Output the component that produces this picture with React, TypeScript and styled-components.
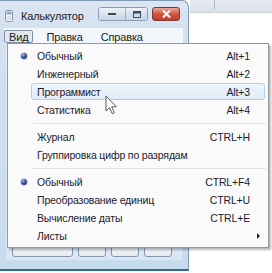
import React from "react";
import styled, { createGlobalStyle } from "styled-components";

const Global = createGlobalStyle`
  html, body { margin: 0; padding: 0; background: #ffffff; overflow: hidden; }
  body { font-family: "Liberation Sans", Arial, sans-serif; letter-spacing: -0.15px; }
`;

const Desktop = styled.div`
  position: relative;
  width: 272px;
  height: 273px;
  background: #ffffff;
  overflow: hidden;
`;

const BackStrip = styled.div`
  position: absolute;
  top: 0;
  left: 190px;
  right: 0;
  height: 12px;
  background: linear-gradient(#e6ebf1, #d9e1ea);
  border-bottom: 1px solid #c9d3de;
`;

const BackDivider = styled.div`
  position: absolute;
  top: 0;
  left: 24px;
  width: 1px;
  height: 9px;
  background: #a9b6c6;
`;

const Window = styled.div`
  position: absolute;
  left: -1px;
  top: 0;
  width: 190px;
  height: 271px;
  display: flex;
  flex-direction: column;
  background: linear-gradient(#dbe6f2 0px, #d3e1ef 30px, #c8dbee 100%);
  border: 1px solid #7f98b3;
  border-left: none;
  border-bottom: 2px solid #2f6e86;
  border-radius: 0 7px 0 0;
  box-sizing: border-box;
`;

const TitleBar = styled.div`
  height: 27px;
  flex: none;
  display: flex;
  align-items: center;
  padding: 2px 8px 0 6px;
  box-sizing: border-box;
`;

const Title = styled.span`
  margin-left: 8px;
  font-size: 11px;
  color: #1b1b22;
  flex: 1;
`;

const CaptionGroup = styled.div`
  display: flex;
  align-items: center;
  gap: 4px;
  margin-top: -3px;
`;

const MinMaxPair = styled.div`
  display: flex;
  border: 1px solid #8c9db3;
  border-radius: 3px;
  overflow: hidden;
  height: 14px;
  box-sizing: border-box;
`;

const CapBtn = styled.div<{ $w: number; $divider?: boolean }>`
  width: ${(p) => p.$w}px;
  height: 12px;
  display: flex;
  align-items: center;
  justify-content: center;
  background: linear-gradient(#eef3f9, #d6e1ee 50%, #c9d7e8);
  border-left: ${(p) => (p.$divider ? "1px solid #9fb0c4" : "none")};
  box-sizing: border-box;
`;

const CloseBtn = styled.div`
  width: 28px;
  height: 14px;
  border: 1px solid #7a3a33;
  border-radius: 3px;
  background: linear-gradient(#e9a89b, #d2563f 50%, #c0402c);
  display: flex;
  align-items: center;
  justify-content: center;
  box-sizing: border-box;
`;

const MenuBar = styled.div`
  height: 16px;
  flex: none;
  margin: 0 5px 0 5px;
  display: flex;
  align-items: center;
  gap: 5px;
  background: #f3f6fa;
`;

const MenuTitle = styled.span<{ $active?: boolean }>`
  font-size: 11px;
  color: #1b1b22;
  padding: 0 4px;
  height: 13px;
  line-height: 12px;
  box-sizing: border-box;
  border: 1px solid ${(p) => (p.$active ? "#7f8fa4" : "transparent")};
  border-radius: 2px;
  background: ${(p) => (p.$active ? "#e3e8ef" : "transparent")};
  margin-right: 3px;
`;

const Client = styled.div`
  flex: 1;
  margin: 0 6px 9px 7px;
  background: linear-gradient(#e7eef7, #dae6f3);
  display: flex;
  flex-direction: column;
  justify-content: flex-end;
  padding: 0 0 3px 6px;
`;

const KeyRow = styled.div`
  display: grid;
  grid-template-columns: repeat(5, 28px);
  gap: 5px;
`;

const Key = styled.div<{ $span?: number }>`
  grid-column: span ${(p) => p.$span ?? 1};
  height: 22px;
  border: 1px solid #8797ab;
  border-radius: 3px;
  background: linear-gradient(#f6f8fb, #e6ecf3);
  box-sizing: border-box;
`;

const DropMenu = styled.div`
  position: absolute;
  left: 7px;
  top: 43px;
  width: 262px;
  padding: 3px 2px 2px 2px;
  box-sizing: border-box;
  background: #fafafa;
  border: 1px solid #979797;
  box-shadow: 2px 2px 2px rgba(0, 0, 0, 0.28);
  display: flex;
  flex-direction: column;
`;

const Item = styled.div<{ $hot?: boolean }>`
  position: relative;
  height: 18px;
  display: grid;
  grid-template-columns: 25px 1fr auto 16px;
  align-items: center;
  font-size: 10.5px;
  color: #1e1a2c;
  &::before {
    content: "";
    position: absolute;
    left: 21px;
    right: 1px;
    top: 0;
    bottom: 1px;
    border-radius: 3px;
    border: 1px solid ${(p) => (p.$hot ? "#b3cdec" : "transparent")};
    background: ${(p) => (p.$hot ? "linear-gradient(#eef4fc, #e2ecf9)" : "transparent")};
  }
`;

const Gutter = styled.span`
  position: relative;
  display: flex;
  justify-content: center;
  padding-left: 2px;
`;

const Label = styled.span`
  position: relative;
  padding-left: 2px;
  white-space: nowrap;
`;

const Shortcut = styled.span`
  position: relative;
  text-align: right;
  padding-left: 12px;
`;

const Sub = styled.span`
  position: relative;
  display: flex;
  justify-content: center;
`;

const Bullet = styled.span`
  width: 6px;
  height: 6px;
  border-radius: 50%;
  background: radial-gradient(circle at 35% 30%, #aab6e6 0%, #3b4e96 45%, #1c2a66 100%);
  box-shadow: 0 0 0 1px rgba(120, 140, 200, 0.35);
`;

const Separator = styled.div`
  height: 9px;
  display: flex;
  align-items: center;
  padding-left: 23px;
  &::after {
    content: "";
    flex: 1;
    height: 1px;
    background: #e0e0e0;
    border-bottom: 1px solid #ffffff;
  }
`;

const Arrow = styled.span`
  width: 0;
  height: 0;
  border-top: 3px solid transparent;
  border-bottom: 3px solid transparent;
  border-left: 3px solid #222;
`;

const Cursor = styled.svg`
  position: absolute;
  left: 105px;
  top: 95px;
`;

type Entry =
  | { kind: "item"; label: string; sc?: string; bullet?: boolean; hot?: boolean; sub?: boolean }
  | { kind: "sep" };

const entries: Entry[] = [
  { kind: "item", label: "Обычный", sc: "Alt+1", bullet: true },
  { kind: "item", label: "Инженерный", sc: "Alt+2" },
  { kind: "item", label: "Программист", sc: "Alt+3", hot: true },
  { kind: "item", label: "Статистика", sc: "Alt+4" },
  { kind: "sep" },
  { kind: "item", label: "Журнал", sc: "CTRL+H" },
  { kind: "item", label: "Группировка цифр по разрядам" },
  { kind: "sep" },
  { kind: "item", label: "Обычный", sc: "CTRL+F4", bullet: true },
  { kind: "item", label: "Преобразование единиц", sc: "CTRL+U" },
  { kind: "item", label: "Вычисление даты", sc: "CTRL+E" },
  { kind: "item", label: "Листы", sub: true },
];

export default function App() {
  return (
    <Desktop>
      <Global />
      <BackStrip>
        <BackDivider />
      </BackStrip>
      <Window>
        <TitleBar>
          <svg width="8" height="12" viewBox="0 0 8 12">
            <rect x="0.5" y="0.5" width="7" height="11" rx="1" fill="#f4f6f8" stroke="#8b98a8" />
            <rect x="1.5" y="1.5" width="5" height="3" fill="#7fb0de" />
            <rect x="1.5" y="6" width="5" height="4.5" fill="#dfe4ea" />
          </svg>
          <Title>Калькулятор</Title>
          <CaptionGroup>
            <MinMaxPair>
              <CapBtn $w={26}>
                <svg width="10" height="4" viewBox="0 0 10 4">
                  <rect x="0.5" y="0.5" width="9" height="3" fill="#3b4a5e" stroke="#f4f8fc" strokeWidth="0.8" />
                </svg>
              </CapBtn>
              <CapBtn $w={22} $divider>
                <svg width="8" height="7" viewBox="0 0 8 7">
                  <rect x="0.5" y="0.5" width="7" height="6" fill="none" stroke="#3b4a5e" />
                  <rect x="1" y="1" width="6" height="1.5" fill="#3b4a5e" />
                </svg>
              </CapBtn>
            </MinMaxPair>
            <CloseBtn>
              <svg width="9" height="8" viewBox="0 0 9 8">
                <path d="M1 0.5 L8 7.5 M8 0.5 L1 7.5" stroke="#ffffff" strokeWidth="2" />
              </svg>
            </CloseBtn>
          </CaptionGroup>
        </TitleBar>
        <MenuBar>
          <MenuTitle $active>Вид</MenuTitle>
          <MenuTitle>Правка</MenuTitle>
          <MenuTitle>Справка</MenuTitle>
        </MenuBar>
        <Client>
          <KeyRow>
            <Key $span={2} />
            <Key />
            <Key />
            <Key />
          </KeyRow>
        </Client>
      </Window>
      <DropMenu>
        {entries.map((e, i) =>
          e.kind === "sep" ? (
            <Separator key={i} />
          ) : (
            <Item key={i} $hot={e.hot}>
              <Gutter>{e.bullet ? <Bullet /> : null}</Gutter>
              <Label>{e.label}</Label>
              <Shortcut>{e.sc ?? ""}</Shortcut>
              <Sub>{e.sub ? <Arrow /> : null}</Sub>
            </Item>
          )
        )}
      </DropMenu>
      <Cursor width="13" height="20" viewBox="0 0 13 20">
        <path
          d="M1 1 L1 16 L4.5 12.6 L7.2 18.6 L9.3 17.7 L6.7 11.8 L11.3 11.8 Z"
          fill="#ffffff"
          stroke="#5a5a5a"
          strokeWidth="1"
          strokeLinejoin="round"
        />
      </Cursor>
    </Desktop>
  );
}
